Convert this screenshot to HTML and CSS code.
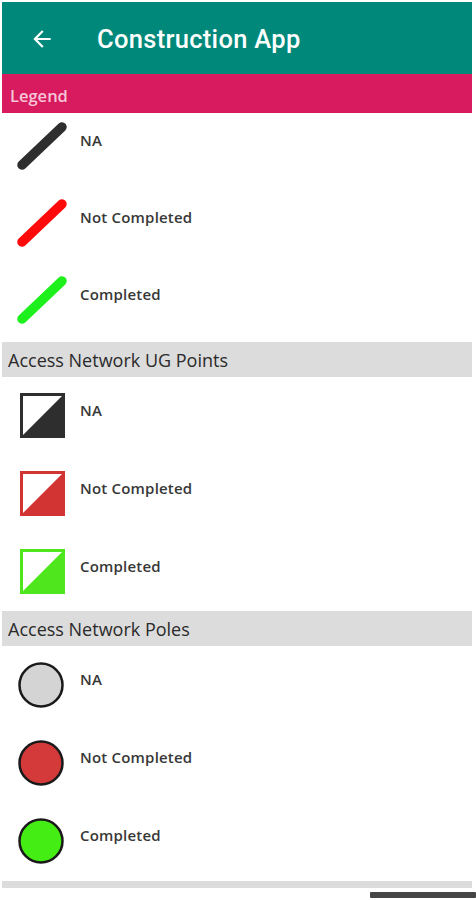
FILE: index.html
```html
<!DOCTYPE html>
<html>
<head>
<meta charset="utf-8">
<link rel="stylesheet" href="styles.css">
</head>
<body>
<div class="page">
  <header class="appbar">
    <svg class="back" viewBox="0 0 24 24" width="26" height="26"><path d="M20 11H7.83l5.59-5.59L12 4l-8 8 8 8 1.41-1.41L7.83 13H20v-2z" fill="#fff"/></svg>
    <h1 class="title">Construction App</h1>
  </header>
  <div class="legend-bar">Legend</div>

  <div class="rows rows-lines">
    <div class="row">
      <svg class="icon line" viewBox="0 0 50 50" width="50" height="50"><line x1="5" y1="44" x2="45" y2="6" stroke="#2e2e2e" stroke-width="9.5" stroke-linecap="round"/></svg>
      <span class="label">NA</span>
    </div>
    <div class="row">
      <svg class="icon line" viewBox="0 0 50 50" width="50" height="50"><line x1="5" y1="44" x2="45" y2="6" stroke="#ff0a0a" stroke-width="9.5" stroke-linecap="round"/></svg>
      <span class="label">Not Completed</span>
    </div>
    <div class="row">
      <svg class="icon line" viewBox="0 0 50 50" width="50" height="50"><line x1="5" y1="44" x2="45" y2="6" stroke="#1ef01e" stroke-width="9.5" stroke-linecap="round"/></svg>
      <span class="label">Completed</span>
    </div>
  </div>

  <div class="section">Access Network UG Points</div>
  <div class="rows">
    <div class="row">
      <svg class="icon sq" viewBox="0 0 45 45" width="45" height="45"><rect x="1.5" y="1.5" width="42" height="42" fill="#fff" stroke="#2e2e2e" stroke-width="3"/><polygon points="43.5,1.5 43.5,43.5 1.5,43.5" fill="#2e2e2e"/></svg>
      <span class="label">NA</span>
    </div>
    <div class="row">
      <svg class="icon sq" viewBox="0 0 45 45" width="45" height="45"><rect x="1.5" y="1.5" width="42" height="42" fill="#fff" stroke="#d23434" stroke-width="3"/><polygon points="43.5,1.5 43.5,43.5 1.5,43.5" fill="#d23434"/></svg>
      <span class="label">Not Completed</span>
    </div>
    <div class="row">
      <svg class="icon sq" viewBox="0 0 45 45" width="45" height="45"><rect x="1.5" y="1.5" width="42" height="42" fill="#fff" stroke="#4fe61e" stroke-width="3"/><polygon points="43.5,1.5 43.5,43.5 1.5,43.5" fill="#4fe61e"/></svg>
      <span class="label">Completed</span>
    </div>
  </div>

  <div class="section">Access Network Poles</div>
  <div class="rows">
    <div class="row">
      <svg class="icon circ" viewBox="0 0 46 46" width="46" height="46"><circle cx="23" cy="23" r="21.5" fill="#d4d4d4" stroke="#1a1a1a" stroke-width="2.5"/></svg>
      <span class="label">NA</span>
    </div>
    <div class="row">
      <svg class="icon circ" viewBox="0 0 46 46" width="46" height="46"><circle cx="23" cy="23" r="21.5" fill="#d43a3a" stroke="#1a1a1a" stroke-width="2.5"/></svg>
      <span class="label">Not Completed</span>
    </div>
    <div class="row">
      <svg class="icon circ" viewBox="0 0 46 46" width="46" height="46"><circle cx="23" cy="23" r="21.5" fill="#44ee14" stroke="#1a1a1a" stroke-width="2.5"/></svg>
      <span class="label">Completed</span>
    </div>
  </div>

  <div class="section section-cut"></div>
  <div class="scroll-ind"></div>
</div>
</body>
</html>
```

FILE: styles.css
```css
html, body {
  margin: 0;
  padding: 0;
  background: #fff;
}
.page {
  width: 470px;
  padding: 2px 4px 0 2px;
  display: flex;
  flex-direction: column;
  font-family: "Open Sans", "Liberation Sans", sans-serif;
}
.appbar {
  height: 72px;
  background: #00897a;
  display: flex;
  align-items: center;
}
.back {
  margin-left: 27px;
  margin-top: 2px;
  flex: none;
}
.title {
  margin: 2px 0 0 42px;
  font-family: Roboto, "Liberation Sans", sans-serif;
  font-weight: 500;
  font-size: 25.5px;
  color: #fff;
  letter-spacing: 0.3px;
}
.legend-bar {
  height: 39px;
  background: #d81a5f;
  color: #f6c6d8;
  font-size: 16.5px;
  font-weight: 600;
  display: flex;
  align-items: center;
  padding-left: 8px;
  padding-top: 4px;
  box-sizing: border-box;
}
.rows {
  display: flex;
  flex-direction: column;
}
.row {
  display: flex;
  align-items: flex-start;
  height: 78px;
  padding-top: 16px;
  box-sizing: border-box;
}
.rows-lines .row {
  height: 77px;
  padding-top: 8px;
}
.rows-lines .row:last-child {
  height: 75px;
}
.icon {
  flex: none;
  display: block;
}
.line {
  margin-left: 15px;
}
.sq {
  margin-left: 18px;
}
.circ {
  margin-left: 16px;
}
.label {
  font-size: 15px;
  font-weight: 600;
  color: #383838;
  line-height: 20px;
  letter-spacing: 0.2px;
  margin-top: 7px;
}
.rows-lines .label {
  margin-top: 9px;
  margin-left: 13px;
}
.sq + .label {
  margin-left: 15px;
}
.circ + .label {
  margin-left: 16px;
}
.section {
  height: 35px;
  background: #dcdcdc;
  color: #2a2a2a;
  font-size: 18px;
  display: flex;
  align-items: center;
  padding-left: 6px;
  padding-top: 1px;
  box-sizing: border-box;
}
.section-cut {
  height: 7px;
  padding: 0;
  margin-top: 1px;
}
.scroll-ind {
  align-self: flex-end;
  width: 106px;
  height: 6px;
  margin-top: 4px;
  margin-right: -4px;
  background: #454545;
  border-radius: 1px;
}
```
